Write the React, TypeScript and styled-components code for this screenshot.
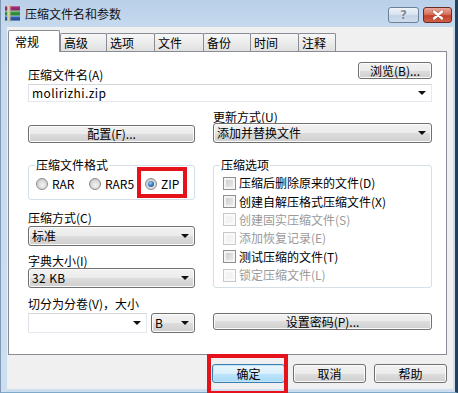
import React from 'react';
import styled, { createGlobalStyle, css } from 'styled-components';

const GlobalStyle = createGlobalStyle`
  html, body {
    margin: 0;
    padding: 0;
    background: #fff;
    overflow: hidden;
  }
  body {
    font-family: "Noto Sans CJK SC", "Noto Sans", sans-serif;
    font-size: 12px;
    color: #000;
  }
  * {
    box-sizing: border-box;
  }
`;

const Window = styled.div`
  width: 458px;
  height: 393px;
  display: flex;
  flex-direction: column;
  background: linear-gradient(180deg, #b9d0ea 0px, #c6d9ee 27px, #cddef1 100%);
  border-left: 1px solid #8199b3;
  border-right: 3px solid #22405e;
  border-bottom: 1px solid #7fa8c9;
  padding: 0 2px 3px 6px;
`;

const TitleBar = styled.div`
  height: 27px;
  flex: none;
  display: flex;
  align-items: center;
  margin-left: -3px;
  padding-right: 1px;
`;

const TitleText = styled.span`
  margin-left: 4px;
  line-height: 14px;
  color: #111;
  flex: 1;
`;

const CaptionButtons = styled.div`
  align-self: flex-start;
  margin-top: 7px;
  display: flex;
  gap: 4px;
`;

const CaptionButton = styled.div<{ $close?: boolean }>`
  height: 16px;
  width: ${p => (p.$close ? 29 : 31)}px;
  border-radius: 3px;
  display: flex;
  align-items: center;
  justify-content: center;
  font-family: "DejaVu Sans", sans-serif;
  font-weight: bold;
  font-size: 12px;
  ${p =>
    p.$close
      ? css`
          border: 1px solid #6b2b22;
          background: linear-gradient(180deg, #e8a99c 0%, #d7705e 45%, #c4412c 55%, #d0614a 100%);
        `
      : css`
          border: 1px solid #6b8199;
          background: linear-gradient(180deg, #eef3f9 0%, #d9e4f0 45%, #c3d3e6 55%, #cfdced 100%);
          color: #7f8b99;
          text-shadow: 0 0 1px #fff, 0 0 1px #fff;
        `}
`;

const Client = styled.div`
  flex: 1;
  background: #f0f0f0;
  display: flex;
  flex-direction: column;
  padding: 3px 6px 0 1px;
`;

const TabStrip = styled.div`
  height: 21px;
  display: flex;
  align-items: flex-end;
`;

const Tab = styled.div<{ $active?: boolean; $width: number; $overlap?: boolean }>`
  width: ${p => p.$width}px;
  border: 1px solid #898c95;
  border-bottom: none;
  display: flex;
  align-items: center;
  line-height: 14px;
  border-radius: 2px 2px 0 0;
  margin-left: ${p => (p.$overlap ? -1 : 0)}px;
  ${p =>
    p.$active
      ? css`
          height: 22px;
          margin-bottom: -1px;
          background: #fff;
          padding-left: 6px;
          position: relative;
          z-index: 1;
        `
      : css`
          height: 18px;
          background: linear-gradient(180deg, #f7f7f7 0%, #ececec 50%, #e0e0e0 100%);
          padding-left: 3px;
        `}
`;

const Panel = styled.div`
  height: 304px;
  border: 1px solid #898c95;
  background: #fff;
  padding: 10px 14px 0 19px;
  display: flex;
  flex-direction: column;
`;

const HeaderRow = styled.div`
  height: 17px;
  display: flex;
  justify-content: space-between;
  align-items: flex-end;
`;

const Label = styled.div<{ $gap?: number }>`
  line-height: 13px;
  margin-top: ${p => p.$gap ?? 0}px;
  white-space: nowrap;
`;

const Button = styled.div<{ $w?: number; $h?: number; $default?: boolean }>`
  width: ${p => (p.$w ? `${p.$w}px` : 'auto')};
  height: ${p => p.$h ?? 18}px;
  border-radius: 3px;
  display: flex;
  align-items: center;
  justify-content: center;
  line-height: 14px;
  white-space: nowrap;
  ${p =>
    p.$default
      ? css`
          border: 1px solid #3c7fb1;
          background: linear-gradient(180deg, #eaf6fd 0%, #d9f0fc 50%, #bee6fd 50%, #a7d9f5 100%);
          box-shadow: inset 0 0 0 1px #c4e5f6;
        `
      : css`
          border: 1px solid #707070;
          background: linear-gradient(180deg, #f2f2f2 0%, #ebebeb 50%, #dddddd 50%, #cfcfcf 100%);
          box-shadow: inset 0 0 0 1px #fbfbfb;
        `}
`;

const Arrow = styled.span`
  width: 0;
  height: 0;
  border-left: 4px solid transparent;
  border-right: 4px solid transparent;
  border-top: 4px solid #111;
  flex: none;
`;

const Dropdown = styled.div<{ $w?: number; $gap?: number }>`
  width: ${p => (p.$w ? `${p.$w}px` : '100%')};
  height: 20px;
  margin-top: ${p => p.$gap ?? 0}px;
  border: 1px solid #707070;
  border-radius: 3px;
  background: linear-gradient(180deg, #f2f2f2 0%, #ebebeb 50%, #dddddd 50%, #cfcfcf 100%);
  box-shadow: inset 0 0 0 1px #fbfbfb;
  display: flex;
  align-items: center;
  justify-content: space-between;
  padding: 0 5px 0 3px;
  line-height: 14px;
`;

const ComboBox = styled.div<{ $w?: number; $h?: number; $gap?: number }>`
  width: ${p => (p.$w ? `${p.$w}px` : '100%')};
  height: ${p => p.$h ?? 18}px;
  margin-top: ${p => p.$gap ?? 0}px;
  background: #fff;
  border: 1px solid;
  border-color: #d4d6da #e3e9ef #e3e9ef #dfe2e8;
  display: flex;
  align-items: center;
  justify-content: space-between;
  padding: 0 5px 0 3px;
  line-height: 14px;
`;

const Columns = styled.div`
  display: grid;
  grid-template-columns: 167px 219px;
  column-gap: 18px;
  margin-top: 8px;
`;

const Column = styled.div`
  display: flex;
  flex-direction: column;
`;

const GroupBox = styled.fieldset<{ $gap?: number }>`
  margin: ${p => p.$gap ?? 0}px 0 0 0;
  padding: 0 7px;
  border: 1px solid #d5dfe5;
  border-radius: 3px;
  min-inline-size: 0;
`;

const Legend = styled.legend`
  padding: 0 1px;
  margin-left: -1px;
  line-height: 14px;
`;

const RadioRow = styled.div`
  display: grid;
  grid-template-columns: 53px 56px auto;
  align-items: center;
  height: 14px;
  margin: 5px 0 8px;
`;

const RadioItem = styled.div`
  display: flex;
  align-items: center;
  gap: 4px;
  line-height: 14px;
  justify-self: start;
`;

const Highlight = styled.div<{ $t: number; $r: number; $b: number; $l: number }>`
  position: relative;
  justify-self: start;
  &::after {
    content: '';
    position: absolute;
    top: ${p => -p.$t}px;
    right: ${p => -p.$r}px;
    bottom: ${p => -p.$b}px;
    left: ${p => -p.$l}px;
    border: 4px solid #e5121c;
    pointer-events: none;
  }
`;

const Radio = styled.span<{ $checked?: boolean }>`
  width: 12px;
  height: 12px;
  border-radius: 50%;
  border: 1px solid #8a8a8a;
  background: radial-gradient(circle at 55% 60%, #f5f5f5 0%, #d6d6d6 55%, #c2c2c2 100%);
  position: relative;
  flex: none;
  ${p =>
    p.$checked &&
    css`
      &::after {
        content: '';
        position: absolute;
        left: 2px;
        top: 2px;
        width: 6px;
        height: 6px;
        border-radius: 50%;
        background: radial-gradient(circle at 40% 35%, #a9d4f5 0%, #3b7ec2 45%, #123f78 100%);
      }
    `}
`;

const CheckList = styled.div`
  display: flex;
  flex-direction: column;
  margin: 2px 0 3px;
  padding-left: 2px;
`;

const CheckRow = styled.div<{ $disabled?: boolean }>`
  height: 18.4px;
  display: flex;
  align-items: center;
  gap: 3px;
  line-height: 14px;
  white-space: nowrap;
  color: ${p => (p.$disabled ? '#9a9a9a' : '#000')};
`;

const CheckBox = styled.span<{ $disabled?: boolean }>`
  width: 13px;
  height: 13px;
  flex: none;
  border: 1px solid ${p => (p.$disabled ? '#c8c8c8' : '#8e8f8f')};
  box-shadow: inset 0 0 0 2px ${p => (p.$disabled ? '#fafafa' : '#f4f4f4')};
  background: ${p =>
    p.$disabled ? '#f3f3f3' : 'linear-gradient(135deg, #c4c4c4 0%, #dcdcdc 50%, #f0f0f0 100%)'};
`;

const VolumeRow = styled.div`
  display: flex;
  gap: 4px;
  margin-top: 3px;
`;

const Footer = styled.div`
  display: flex;
  justify-content: flex-end;
  gap: 8px;
  padding-top: 9px;
`;

const Mono = styled.span`
  letter-spacing: 0.4px;
`;

const RarIcon = () => (
  <svg width="17" height="17" viewBox="0 0 17 17">
    <rect x="1" y="1" width="15" height="4.6" fill="#8b2b6a" />
    <rect x="1" y="1" width="15" height="1.2" fill="#c9579a" />
    <rect x="1" y="6" width="15" height="4.6" fill="#2e8b3a" />
    <rect x="1" y="6" width="15" height="1.2" fill="#6cc06f" />
    <rect x="1" y="11" width="15" height="4.6" fill="#27549f" />
    <rect x="1" y="11" width="15" height="1.2" fill="#6c95d6" />
    <rect x="3.5" y="0.5" width="3" height="16" fill="#c8bc93" />
    <rect x="3.5" y="0.5" width="1" height="16" fill="#e9e1c6" />
  </svg>
);

const CloseGlyph = () => (
  <svg width="12" height="10" viewBox="0 0 12 10">
    <path d="M2 1.5 L10 8.5 M10 1.5 L2 8.5" stroke="#5a1d14" strokeWidth="3.6" strokeLinecap="round" opacity="0.35" />
    <path d="M2 1.5 L10 8.5 M10 1.5 L2 8.5" stroke="#fff" strokeWidth="2.4" strokeLinecap="round" />
  </svg>
);

const tabs = [
  { label: '常规', width: 52 },
  { label: '高级', width: 47 },
  { label: '选项', width: 49 },
  { label: '文件', width: 50 },
  { label: '备份', width: 48 },
  { label: '时间', width: 49 },
  { label: '注释', width: 38 },
];

const options = [
  { label: '压缩后删除原来的文件(D)', disabled: false },
  { label: '创建自解压格式压缩文件(X)', disabled: false },
  { label: '创建固实压缩文件(S)', disabled: true },
  { label: '添加恢复记录(E)', disabled: true },
  { label: '测试压缩的文件(T)', disabled: false },
  { label: '锁定压缩文件(L)', disabled: true },
];

export default function App() {
  return (
    <>
      <GlobalStyle />
      <Window>
        <TitleBar>
          <RarIcon />
          <TitleText>压缩文件名和参数</TitleText>
          <CaptionButtons>
            <CaptionButton>?</CaptionButton>
            <CaptionButton $close>
              <CloseGlyph />
            </CaptionButton>
          </CaptionButtons>
        </TitleBar>
        <Client>
          <TabStrip>
            {tabs.map((t, i) => (
              <Tab key={t.label} $active={i === 0} $width={t.width} $overlap={i > 1}>
                {t.label}
              </Tab>
            ))}
          </TabStrip>
          <Panel>
            <HeaderRow>
              <Label style={{ marginBottom: -2 }}>压缩文件名(A)</Label>
              <Button $w={74} $h={17}>浏览(B)...</Button>
            </HeaderRow>
            <ComboBox $gap={5}>
              <Mono>molirizhi.zip</Mono>
              <Arrow />
            </ComboBox>
            <Columns>
              <Column>
                <Button $h={18} style={{ marginTop: 15 }}>配置(F)...</Button>
                <GroupBox $gap={15}>
                  <Legend>压缩文件格式</Legend>
                  <RadioRow>
                    <RadioItem>
                      <Radio />
                      RAR
                    </RadioItem>
                    <RadioItem>
                      <Radio />
                      RAR5
                    </RadioItem>
                    <Highlight $t={10} $r={8} $b={7} $l={8}>
                      <RadioItem>
                        <Radio $checked />
                        ZIP
                      </RadioItem>
                    </Highlight>
                  </RadioRow>
                </GroupBox>
                <Label $gap={11}>压缩方式(C)</Label>
                <Dropdown $gap={2}>
                  <span>标准</span>
                  <Arrow />
                </Dropdown>
                <Label $gap={8}>字典大小(I)</Label>
                <Dropdown $gap={1}>
                  <Mono>32 KB</Mono>
                  <Arrow />
                </Dropdown>
                <Label $gap={9}>切分为分卷(V)，大小</Label>
                <VolumeRow>
                  <ComboBox $w={119} $h={20}>
                    <span />
                    <Arrow />
                  </ComboBox>
                  <Dropdown $w={44}>
                    <span>B</span>
                    <Arrow />
                  </Dropdown>
                </VolumeRow>
              </Column>
              <Column>
                <Label>更新方式(U)</Label>
                <Dropdown>
                  <span>添加并替换文件</span>
                  <Arrow />
                </Dropdown>
                <GroupBox $gap={15}>
                  <Legend>压缩选项</Legend>
                  <CheckList>
                    {options.map(o => (
                      <CheckRow key={o.label} $disabled={o.disabled}>
                        <CheckBox $disabled={o.disabled} />
                        {o.label}
                      </CheckRow>
                    ))}
                  </CheckList>
                </GroupBox>
                <Button $h={17} style={{ marginTop: 25 }}>设置密码(P)...</Button>
              </Column>
            </Columns>
          </Panel>
          <Footer>
            <Highlight $t={10} $r={3} $b={12} $l={5}>
              <Button $w={73} $h={19} $default>确定</Button>
            </Highlight>
            <Button $w={73} $h={19}>取消</Button>
            <Button $w={73} $h={19}>帮助</Button>
          </Footer>
        </Client>
      </Window>
    </>
  );
}
